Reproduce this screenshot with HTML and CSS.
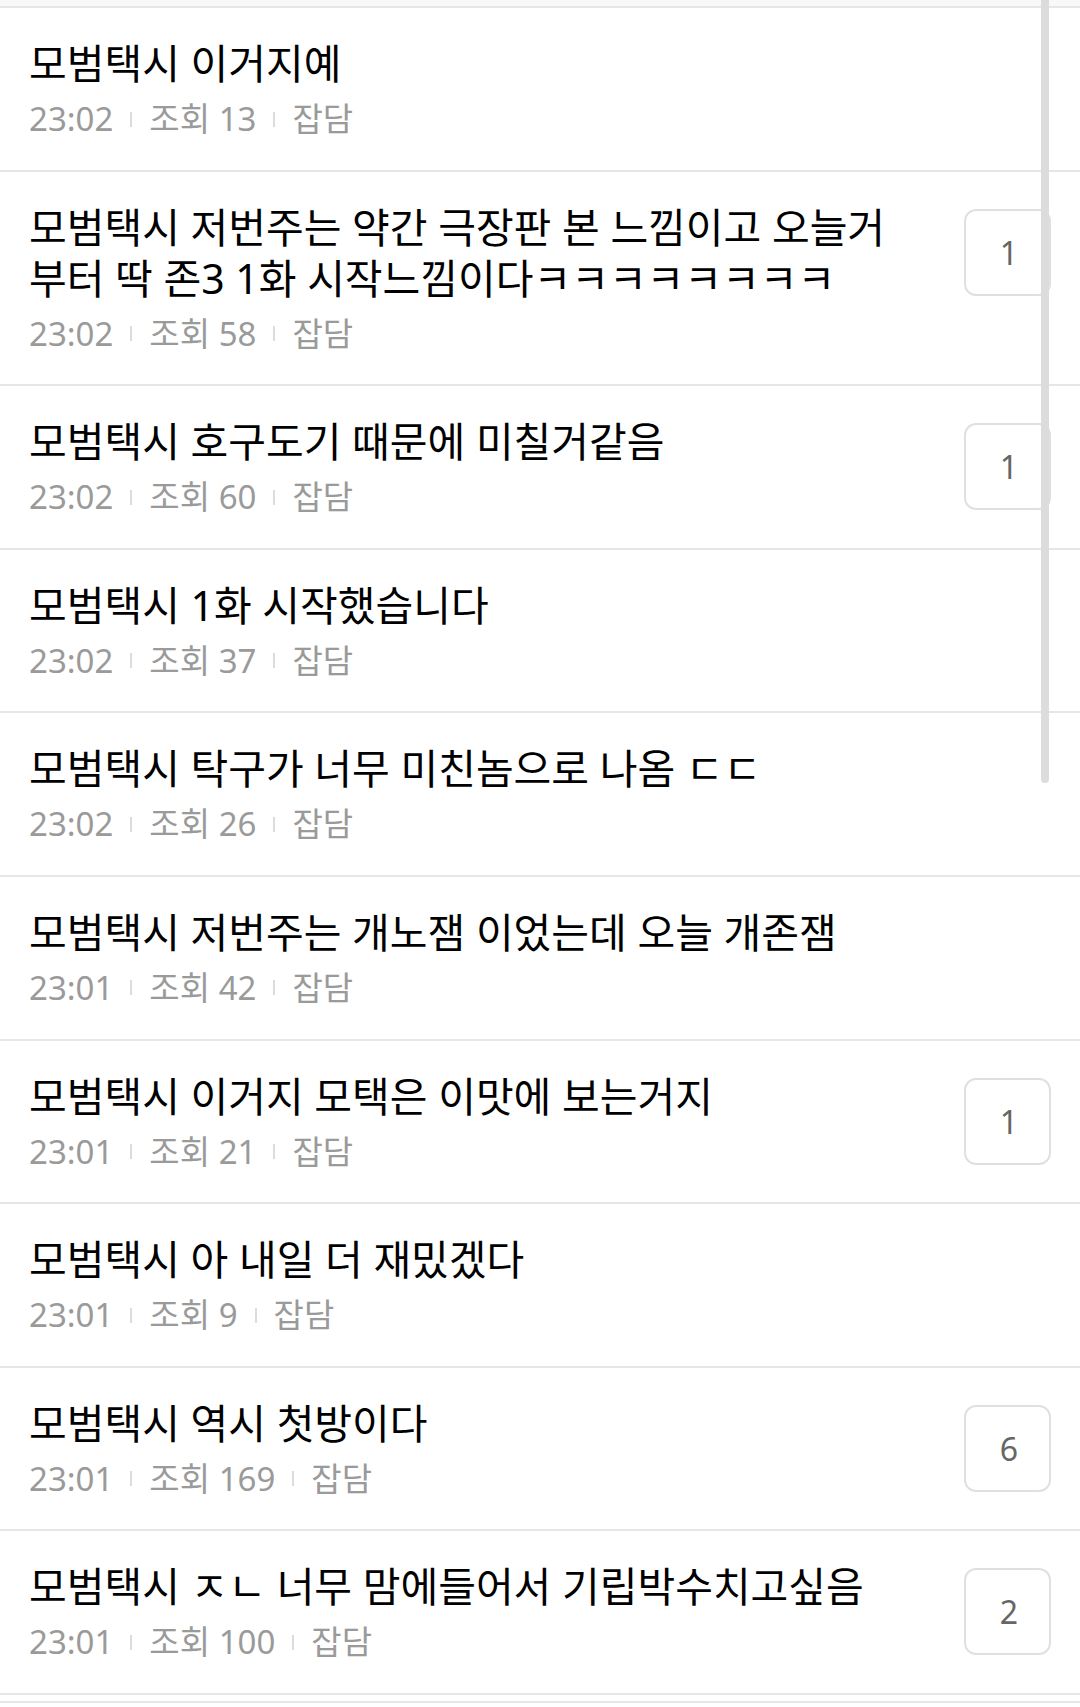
FILE: index.html
```html
<!DOCTYPE html>
<html lang="ko">
  <head>
    <meta charset="UTF-8" />
    <meta name="viewport" content="width=device-width, initial-scale=1.0" />
    <title>게시판</title>
    <link rel="stylesheet" href="styles.css">
  </head>
  <body>
    <div class="top-strip"></div>

    <ul class="post-list">
      <li class="post">
        <div class="info">
          <div class="title">모범택시 이거지예</div>
          <div class="meta"><span>23:02</span><i class="sep"></i><span>조회 13</span><i class="sep"></i><span>잡담</span></div>
        </div>
      </li>
      <li class="post">
        <div class="info">
          <div class="title">모범택시 저번주는 약간 극장판 본 느낌이고 오늘거부터 딱 존3 1화 시작느낌이다ㅋㅋㅋㅋㅋㅋㅋㅋ</div>
          <div class="meta"><span>23:02</span><i class="sep"></i><span>조회 58</span><i class="sep"></i><span>잡담</span></div>
        </div>
        <div class="comments">1</div>
      </li>
      <li class="post">
        <div class="info">
          <div class="title">모범택시 호구도기 때문에 미칠거같음</div>
          <div class="meta"><span>23:02</span><i class="sep"></i><span>조회 60</span><i class="sep"></i><span>잡담</span></div>
        </div>
        <div class="comments">1</div>
      </li>
      <li class="post">
        <div class="info">
          <div class="title">모범택시 1화 시작했습니다</div>
          <div class="meta"><span>23:02</span><i class="sep"></i><span>조회 37</span><i class="sep"></i><span>잡담</span></div>
        </div>
      </li>
      <li class="post">
        <div class="info">
          <div class="title">모범택시 탁구가 너무 미친놈으로 나옴 ㄷㄷ</div>
          <div class="meta"><span>23:02</span><i class="sep"></i><span>조회 26</span><i class="sep"></i><span>잡담</span></div>
        </div>
      </li>
      <li class="post">
        <div class="info">
          <div class="title">모범택시 저번주는 개노잼 이었는데 오늘 개존잼</div>
          <div class="meta"><span>23:01</span><i class="sep"></i><span>조회 42</span><i class="sep"></i><span>잡담</span></div>
        </div>
      </li>
      <li class="post">
        <div class="info">
          <div class="title">모범택시 이거지 모택은 이맛에 보는거지</div>
          <div class="meta"><span>23:01</span><i class="sep"></i><span>조회 21</span><i class="sep"></i><span>잡담</span></div>
        </div>
        <div class="comments">1</div>
      </li>
      <li class="post">
        <div class="info">
          <div class="title">모범택시 아 내일 더 재밌겠다</div>
          <div class="meta"><span>23:01</span><i class="sep"></i><span>조회 9</span><i class="sep"></i><span>잡담</span></div>
        </div>
      </li>
      <li class="post">
        <div class="info">
          <div class="title">모범택시 역시 첫방이다</div>
          <div class="meta"><span>23:01</span><i class="sep"></i><span>조회 169</span><i class="sep"></i><span>잡담</span></div>
        </div>
        <div class="comments">6</div>
      </li>
      <li class="post">
        <div class="info">
          <div class="title">모범택시 ㅈㄴ 너무 맘에들어서 기립박수치고싶음</div>
          <div class="meta"><span>23:01</span><i class="sep"></i><span>조회 100</span><i class="sep"></i><span>잡담</span></div>
        </div>
        <div class="comments">2</div>
      </li>
    </ul>

    <div class="list-footer"></div>

    <div class="scrollbar"></div>
  </body>
</html>
```

FILE: styles.css
```css
body {
  margin: 0;
  background: #fff;
  font-family: "Noto Sans", "Noto Sans CJK KR", sans-serif;
}
.top-strip {
  height: 6px;
  background-color: #f8f8f8;
  border-bottom: 2px solid #e6e6e6;
}
.post-list {
  list-style: none;
  margin: 0;
  padding: 0;
}
.post {
  display: flex;
  align-items: flex-start;
  gap: 55px;
  padding: 30px 29px 29.6px 29px;
  border-bottom: 2px solid #e6e6e6;
}
.info {
  flex: 1;
  min-width: 0;
}
.title {
  font-size: 41px;
  line-height: 51px;
  color: #000;
}
.meta {
  display: flex;
  align-items: center;
  margin-top: 9px;
  font-size: 33px;
  line-height: 42px;
  color: #9a9a9a;
}
.sep {
  width: 2px;
  height: 15px;
  margin: 0 17px;
  background-color: #dcdcdc;
}
.comments {
  box-sizing: border-box;
  width: 87px;
  height: 87px;
  margin-top: 7px;
  border: 2px solid #e0e0e0;
  border-radius: 12px;
  display: flex;
  align-items: center;
  justify-content: center;
  padding-left: 3px;
  font-size: 32px;
  color: #666;
}
.list-footer {
  margin-top: 6px;
  height: 20px;
  border-top: 2px solid #e6e6e6;
}
.scrollbar {
  position: fixed;
  top: 0;
  right: 31px;
  width: 8px;
  height: 783px;
  border-radius: 0 0 4px 4px;
  background-color: #dcdcdc;
}
```
